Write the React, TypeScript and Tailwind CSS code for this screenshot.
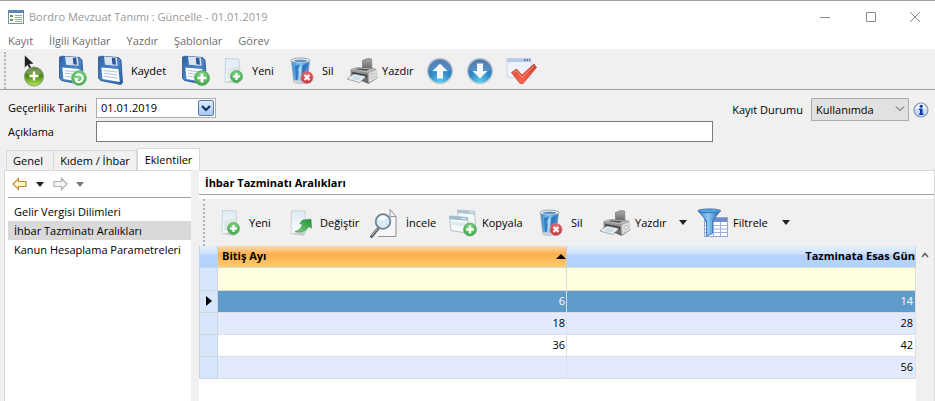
import type { ReactNode } from "react";

const menus = ["Kayıt", "İlgili Kayıtlar", "Yazdır", "Şablonlar", "Görev"];

const sections = ["Gelir Vergisi Dilimleri", "İhbar Tazminatı Aralıkları", "Kanun Hesaplama Parametreleri"];

const rows = [
  { month: "6", days: "14" },
  { month: "18", days: "28" },
  { month: "36", days: "42" },
  { month: "", days: "56" },
];

// Gradients shared by all the toolbar icons.
function IconDefs() {
  return (
    <svg className="absolute size-0" aria-hidden="true">
      <defs>
        <linearGradient id="disk" x1="0" y1="0" x2="1" y2="1">
          <stop offset="0" stopColor="#2f62a8" />
          <stop offset="0.5" stopColor="#4b86c8" />
          <stop offset="1" stopColor="#2b5da0" />
        </linearGradient>
        <linearGradient id="paper" x1="0" y1="0" x2="0" y2="1">
          <stop offset="0" stopColor="#dfeaf4" />
          <stop offset="1" stopColor="#fbfdfd" />
        </linearGradient>
        <radialGradient id="green" cx="0.5" cy="0.35" r="0.65">
          <stop offset="0" stopColor="#8fe08f" />
          <stop offset="1" stopColor="#3aa045" />
        </radialGradient>
        <linearGradient id="lime" x1="0" y1="0" x2="0" y2="1">
          <stop offset="0" stopColor="#3d6a14" />
          <stop offset="0.5" stopColor="#4f8f16" />
          <stop offset="1" stopColor="#b8ee5a" />
        </linearGradient>
        <radialGradient id="red" cx="0.5" cy="0.35" r="0.65">
          <stop offset="0" stopColor="#f08080" />
          <stop offset="1" stopColor="#c22c34" />
        </radialGradient>
        <linearGradient id="bin" x1="0" y1="0" x2="1" y2="0">
          <stop offset="0" stopColor="#2f86cf" />
          <stop offset="0.45" stopColor="#8fd0f5" />
          <stop offset="1" stopColor="#2a6fbb" />
        </linearGradient>
        <radialGradient id="orb" cx="0.5" cy="0.95" r="0.95">
          <stop offset="0" stopColor="#5fd0f5" />
          <stop offset="0.5" stopColor="#2f86c4" />
          <stop offset="1" stopColor="#3a5f9e" />
        </radialGradient>
        <linearGradient id="metal" x1="0" y1="0" x2="0" y2="1">
          <stop offset="0" stopColor="#a9a9a9" />
          <stop offset="1" stopColor="#5c5c5c" />
        </linearGradient>
        <linearGradient id="check" x1="0" y1="0" x2="0" y2="1">
          <stop offset="0" stopColor="#c8402c" />
          <stop offset="1" stopColor="#ff6a52" />
        </linearGradient>
        <linearGradient id="funnel" x1="0" y1="0" x2="1" y2="0">
          <stop offset="0" stopColor="#2e7fca" />
          <stop offset="0.45" stopColor="#8ccbf3" />
          <stop offset="1" stopColor="#1d5ea6" />
        </linearGradient>
        <linearGradient id="arrow" x1="0" y1="1" x2="1" y2="0">
          <stop offset="0" stopColor="#7fd67f" />
          <stop offset="1" stopColor="#1f8c34" />
        </linearGradient>
      </defs>
    </svg>
  );
}

function PlusDot({ cx, cy, r = 6.5 }: { cx: number; cy: number; r?: number }) {
  return (
    <g>
      <circle cx={cx} cy={cy} r={r} fill="url(#green)" stroke="#5fae66" strokeWidth="0.8" />
      <path d={`M${cx - r * 0.6} ${cy}h${r * 1.2}M${cx} ${cy - r * 0.6}v${r * 1.2}`} stroke="#fff" strokeWidth={r * 0.36} />
    </g>
  );
}

function CursorAddIcon() {
  return (
    <svg width="24" height="34" viewBox="0 0 24 34">
      <circle cx="12" cy="22.5" r="9.5" fill="url(#lime)" stroke="#8a9a72" />
      <path d="M4 19a8.5 7 0 0 1 16 0q-8 5-16 0z" fill="#fff" opacity="0.25" />
      <path d="M7.500 22h9M12 17.500v9" stroke="#fff" strokeWidth="2.400" />
      <path d="M2.500 1v13l3-2.800 1.800 3.600 2.200-1.200-1.900-3.300 4.400-.5z" fill="#222" stroke="#fff" strokeWidth="0.500" />
    </svg>
  );
}

function Disk() {
  return (
    <g>
      <path d="M1.500 2 4 1.200 21.500 2.500 24 5 25.500 28 23.500 29.500 3.500 25.500 1.500 23z" fill="url(#disk)" stroke="#23508f" strokeWidth="0.8" />
      <path d="M7 1.600 19.800 2.500 20.600 10.800 8 9.800z" fill="#dbe4ee" />
      <path d="M14.800 2.800 18.300 3.100 19 9.700 15.400 9.300z" fill="#2c589a" />
      <path d="M4.300 12.500 21.300 14 22.800 27 5.500 24z" fill="#fbfdff" />
      <path d="M6.500 15.500 20 17M6.800 18.200 20.300 20M7.200 21 20.600 23.200" stroke="#a9bccd" strokeWidth="0.900" />
    </g>
  );
}

function SaveIcon({ badge }: { badge?: "refresh" | "add" }) {
  return (
    <svg width="30" height="32" viewBox="0 0 30 32">
      <Disk />
      {badge === "add" ? <PlusDot cx={21} cy={23} r={7.5} /> : null}
      {badge === "refresh" ? (
        <g>
          <circle cx="21" cy="23" r="7.500" fill="url(#green)" stroke="#8bc790" />
          <path d="M17.500 25.500a4 4 0 1 0 .3-5" fill="none" stroke="#fff" strokeWidth="2" />
          <path d="M15.500 22.500l5.500 1-2.500 4z" fill="#fff" />
        </g>
      ) : null}
    </svg>
  );
}

function NewIcon() {
  return (
    <svg width="20" height="28" viewBox="0 0 20 28">
      <path d="M1.500 1.500 15 2l1 20L1 25z" fill="url(#paper)" stroke="#bccbd6" strokeWidth="0.8" />
      <path d="M1 25 14 27l2-5z" fill="#c9cfcf" />
      <path d="M3 12 15 9v10L3 22z" fill="#cfe3dc" opacity="0.6" />
      <PlusDot cx={12.500} cy={19.500} r={6} />
    </svg>
  );
}

function EditIcon() {
  return (
    <svg width="22" height="28" viewBox="0 0 22 28">
      <path d="M1.500 1.500 15 2l1 20L1 25z" fill="url(#paper)" stroke="#bccbd6" strokeWidth="0.8" />
      <path d="M1 25 14 27l2-5z" fill="#c4cccc" />
      <path d="M5 22.500c4-1 6.500-3.500 7.500-7l-2.700-1L12.500 11l8.500-.8.5 9-2.500-1.700C16 21.500 12 24 5 22.500z" fill="url(#arrow)" stroke="#2f9440" strokeWidth="0.600" />
    </svg>
  );
}

function TrashIcon() {
  return (
    <svg width="24" height="28" viewBox="0 0 24 28">
      <path d="M1.500 4h18L17 25.500q-6.500 2-13 0z" fill="url(#bin)" stroke="#8aa3ba" strokeWidth="0.8" />
      <path d="m5 9 5-2-3 9 6-8 4-1-4 14-7 2z" fill="#1d65b5" opacity="0.75" />
      <path d="m9 12 3-3-1 12-3 2z" fill="#c8ecff" opacity="0.8" />
      <path d="M3.500 22.500q6 2 13.500 0L16.500 26q-6 1.500-12.500 0z" fill="#c9d2d9" />
      <ellipse cx="10.500" cy="3.500" rx="9.500" ry="2.500" fill="#eef3f6" stroke="#98a6b1" />
      <ellipse cx="10.500" cy="3.800" rx="7" ry="1.200" fill="#5a93c4" />
      <circle cx="17" cy="20.500" r="6" fill="url(#red)" stroke="#d47a7a" strokeWidth="0.8" />
      <path d="m14.500 18 5 5m0-5-5 5" stroke="#fff" strokeWidth="2" />
    </svg>
  );
}

function PrinterIcon() {
  return (
    <svg width="32" height="28" viewBox="0 0 32 28">
      <path d="M16.500 3.500Q22 .5 25.500 2L26 13l-9.500 1z" fill="url(#metal)" stroke="#777" strokeWidth="0.7" />
      <path d="m5 12.500 6.500-2 18 1.500 1.500 9-8.500 5.500L5 19.500z" fill="url(#metal)" stroke="#666" strokeWidth="0.6" />
      <path d="m5 12.500 6.500-2 18 1.500-7 3.500z" fill="#b9b9b9" />
      <path d="m9 12.300 3.500-.9 11 .8-3 1.600z" fill="#4e4e4e" />
      <path d="m22.500 16 8-3.500.5 8.500-8.500 5z" fill="#d9dadb" />
      <path d="m6.500 15 14.500 3v3L6.500 17.500z" fill="#353535" />
      <path d="m8 17 12 2.500-6.500 6L1 22z" fill="#eef4f8" stroke="#8f979d" strokeWidth="0.8" />
      <path d="m8 18.500 8.500 1.800-4 3.400-7-1.500z" fill="#cadeea" />
      <circle cx="27" cy="18.500" r="1.500" fill="#fff" stroke="#999" strokeWidth="0.6" />
    </svg>
  );
}

function OrbIcon({ down }: { down?: boolean }) {
  return (
    <svg width="28" height="28" viewBox="0 0 28 28">
      <circle cx="14" cy="14" r="12.500" fill="url(#orb)" stroke="#c3ccd6" strokeWidth="1.500" />
      <path d="M2.800 13a11.200 11.200 0 0 1 22.400 0q-11 5-22.400 0z" fill="#fff" opacity="0.15" />
      <path d={down ? "M11 6.500h6V14h4.500L14 21.500 6.500 14H11z" : "M11 21.500h6V14h4.500L14 6.500 6.500 14H11z"} fill="#f4f8fc" />
    </svg>
  );
}

function CheckIcon() {
  return (
    <svg width="32" height="28" viewBox="0 0 32 28">
      <rect x="1" y="1.500" width="24" height="19" fill="#eef3fb" stroke="#c5d1e2" strokeWidth="0.8" />
      <path d="M1 1.500h24V5H1z" fill="#b7cbe8" />
      <path d="M18 3h1.500m1 0H22m1 0h1" stroke="#49628f" strokeWidth="1.300" />
      <path d="m5.500 15.500 5-3.500 5.500 6L28 7l2.500 3.500L17 26.500h-3z" fill="url(#check)" stroke="#c94632" strokeWidth="0.8" />
      <path d="m7.500 15.500 2.800-1.800 5.700 6.500L28 9" fill="none" stroke="#ffa08c" strokeWidth="0.900" />
    </svg>
  );
}

function InspectIcon() {
  return (
    <svg width="28" height="30" viewBox="0 0 28 30">
      <path d="M6 2h14l6 6.500V28.500H6z" fill="#f5f6f7" />
      <path d="M20 1.500v7h6zM26 8.500v20H8" fill="none" stroke="#8c9399" />
      <path d="m9 19.500-7.500 9" stroke="#5c6670" strokeWidth="3" strokeLinecap="round" />
      <path d="m8.500 19.500-7 8.300" stroke="#b9c2ca" />
      <circle cx="13" cy="13.500" r="7.300" fill="#d8ebf8" stroke="#6f8396" strokeWidth="1.800" />
      <path d="M8 12a5.300 5.300 0 0 1 9-2.500q-3 3.500-9 2.500z" fill="#fff" opacity="0.9" />
    </svg>
  );
}

function CopyIcon() {
  return (
    <svg width="30" height="28" viewBox="0 0 30 28">
      <path d="m9.500 1 17 1.500 1 15-17-1.500z" fill="#f4f8f9" stroke="#a9b6bc" strokeWidth="0.8" />
      <path d="m9.500 1 17 1.500.2 3-17-1.500z" fill="#a9c4d3" />
      <path d="m1.500 7 18 1.500 1.500 16L3 21.500z" fill="#f7fafa" stroke="#a2b0b6" strokeWidth="0.8" />
      <path d="m1.500 7 18 1.500.3 3.200-18-1.500z" fill="#9dbccd" />
      <path d="m3 12 17 2v4L3.500 16z" fill="#dfecee" />
      <path d="M14 9.500l4.500.4M21.500 3.300l4 .4" stroke="#e9f4fa" />
      <PlusDot cx={22} cy={20.500} />
    </svg>
  );
}

function FilterIcon() {
  return (
    <svg width="32" height="30" viewBox="0 0 32 30">
      <rect x="7.500" y="9.500" width="23" height="19" fill="#fff" stroke="#96a6cf" />
      <path d="M8 10h22v4H8z" fill="#6f8ccd" />
      <path d="M8 17.500h22M8 21h22M8 24.500h22M16.500 14v14M23.500 14v14" stroke="#9eaee0" />
      <path d="M1 2.500 9.500 13v15l6-2.500V13L23.500 2.500z" fill="url(#funnel)" stroke="#2b69ac" strokeWidth="0.8" />
      <ellipse cx="12.300" cy="2.800" rx="11.300" ry="1.900" fill="#5aa2dd" stroke="#2b69ac" strokeWidth="0.8" />
    </svg>
  );
}

function InfoIcon() {
  return (
    <svg width="16" height="16" viewBox="0 0 16 16">
      <circle cx="8" cy="8" r="7" fill="#c9dcf5" stroke="#8796ab" strokeWidth="1.200" />
      <path d="M2.500 7a5.500 5.500 0 0 1 11 0z" fill="#fff" opacity="0.6" />
      <circle cx="8.200" cy="4.200" r="1.500" fill="#0a37b5" />
      <path d="M6 6.500h3.500v5h1V13H6v-1.500h1V8H6z" fill="#0a37b5" />
    </svg>
  );
}

function Caret({ className = "text-black" }: { className?: string }) {
  return (
    <svg width="8" height="5" viewBox="0 0 8 5" className={className}>
      <path d="M0 0h8L4 5z" fill="currentColor" />
    </svg>
  );
}

function NavArrow({ flip, color, fill }: { flip?: boolean; color: string; fill: string }) {
  return (
    <svg width="16" height="14" viewBox="0 0 16 14">
      <path
        d={flip ? "M15 7 9.500 1.500v3H2v5h7.500v3z" : "M1 7l5.500-5.500v3H14v5H6.500v3z"}
        fill={fill}
        stroke={color}
        strokeWidth="1.200"
      />
    </svg>
  );
}

function Grip() {
  return <span className="w-0.5 shrink-0 self-stretch border-l-2 border-dotted border-[#b4b4b4]" />;
}

function Tool({ icon, label, title, className }: { icon: ReactNode; label?: string; title?: string; className: string }) {
  return (
    <button type="button" aria-label={label ?? title} className={`flex shrink-0 items-center ${className}`}>
      {icon}
      {label}
    </button>
  );
}

function TitleBar() {
  return (
    <header className="flex h-8 items-center border-t border-[#a0a0a0] pl-2 text-[#999]">
      <svg width="16" height="14" viewBox="0 0 16 14" className="mr-[5px]">
        <rect x="0.500" y="0.500" width="15" height="13" fill="#fff" stroke="#7c8fa6" />
        <path d="M0 0h16v3H0z" fill="#5f86b5" />
        <path d="M2 5h3v2H2zM2 9h3v2H2z" fill="#5a9a55" />
        <path d="M7 5.500h7M7 7.500h7M7 9.500h7M7 11.500h7" stroke="#8ea8c8" />
      </svg>
      <h1 className="flex-1">Bordro Mevzuat Tanımı : Güncelle - 01.01.2019</h1>
      <button type="button" aria-label="Simge durumuna küçült" className="flex w-11 justify-center">
        <svg width="10" height="10" viewBox="0 0 10 10"><path d="M0 5.500h10" stroke="#8a8a8a" /></svg>
      </button>
      <button type="button" aria-label="Ekranı kapla" className="flex w-12 justify-center">
        <svg width="10" height="10" viewBox="0 0 10 10"><path d="M.5.5h9v9h-9z" fill="none" stroke="#8a8a8a" /></svg>
      </button>
      <button type="button" aria-label="Kapat" className="flex w-10 justify-center">
        <svg width="10" height="10" viewBox="0 0 10 10"><path d="m0 0 10 10M10 0 0 10" stroke="#8a8a8a" /></svg>
      </button>
    </header>
  );
}

function MainToolbar() {
  return (
    <div className="flex h-[41px] items-center border-b border-[#a0a0a0] pt-[3px] pl-1">
      <Grip />
      <Tool className="ml-4 w-9" title="Seç" icon={<CursorAddIcon />} />
      <Tool className="w-[39px]" title="Kaydet ve yenile" icon={<SaveIcon badge="refresh" />} />
      <Tool className="w-[84px] gap-1" label="Kaydet" icon={<SaveIcon />} />
      <Tool className="w-[43px]" title="Kaydet ve yeni" icon={<SaveIcon badge="add" />} />
      <Tool className="w-[66px] gap-2" label="Yeni" icon={<NewIcon />} />
      <Tool className="w-[56px] gap-2" label="Sil" icon={<TrashIcon />} />
      <Tool className="w-20 gap-1" label="Yazdır" icon={<PrinterIcon />} />
      <Tool className="w-10" title="Yukarı" icon={<OrbIcon />} />
      <Tool className="w-10" title="Aşağı" icon={<OrbIcon down />} />
      <Tool className="w-8" title="Onayla" icon={<CheckIcon />} />
    </div>
  );
}

function RecordForm() {
  return (
    <form className="flex items-start pt-2 pr-1.5 pl-2">
      <div className="grid flex-1 grid-cols-[88px_1fr] items-center gap-y-[3px]">
        <label htmlFor="valid-date">Geçerlilik Tarihi</label>
        <div className="flex h-5 w-30 items-center border border-[#abadb3] bg-white pr-px">
          <input id="valid-date" defaultValue="01.01.2019" className="w-full min-w-0 pl-1 outline-none" />
          <button
            type="button"
            aria-label="Takvimi aç"
            className="flex h-4 w-4 shrink-0 items-center justify-center rounded-xs border border-[#5c7da8] bg-linear-to-b from-[#dcebfd] to-[#a6c8f5]"
          >
            <svg width="10" height="7" viewBox="0 0 10 7"><path d="m1 1 4 4 4-4" fill="none" stroke="#15305c" strokeWidth="2.200" /></svg>
          </button>
        </div>
        <label htmlFor="description">Açıklama</label>
        <input id="description" className="h-[21px] w-full border border-[#7a7a7a] bg-white px-1 outline-none" />
      </div>
      <div className="flex w-54 items-center justify-end">
        <label htmlFor="status" className="mr-2">Kayıt Durumu</label>
        <div className="relative mr-1">
          <select id="status" className="h-[23px] w-[98px] appearance-none border border-[#adadad] bg-[#e1e1e1] pl-1 outline-none">
            <option>Kullanımda</option>
          </select>
          <svg width="10" height="6" viewBox="0 0 10 6" className="pointer-events-none absolute top-2 right-1">
            <path d="m1 .5 4 4 4-4" fill="none" stroke="#444" />
          </svg>
        </div>
        <InfoIcon />
      </div>
    </form>
  );
}

function Tabs() {
  const tab = "border border-b-0 border-[#d9d9d9]";
  return (
    <div role="tablist" className="mt-1.5 flex items-end pl-1.5">
      <button type="button" role="tab" className={`h-5 w-12 pr-1 ${tab}`}>Genel</button>
      <button type="button" role="tab" className={`h-5 w-[83px] border-l-0 ${tab}`}>Kıdem / İhbar</button>
      <button type="button" role="tab" aria-selected="true" className={`h-[22px] w-[63px] bg-white ${tab}`}>Eklentiler</button>
    </div>
  );
}

function Sidebar() {
  return (
    <aside className="w-[187px] shrink-0 border-t border-l border-[#d9d9d9] bg-white pl-[3px]">
      <div className="flex h-[27px] items-center gap-2 border-b border-[#a0a0a0] pl-1">
        <button type="button" aria-label="Geri"><NavArrow color="#c08a2c" fill="#fff3c4" /></button>
        <Caret className="text-[#222]" />
        <button type="button" aria-label="İleri"><NavArrow flip color="#b0b0b0" fill="#f6f6f6" /></button>
        <Caret className="text-[#777]" />
      </div>
      <ul className="pt-1">
        {sections.map((name, i) => (
          <li key={name}>
            <a href="#" className={`block h-[19px] pl-1.5 leading-[19px] whitespace-nowrap ${i === 1 ? "bg-[#d9d9d9]" : ""}`}>
              {name}
            </a>
          </li>
        ))}
      </ul>
    </aside>
  );
}

function GridToolbar() {
  return (
    <div className="flex h-[47px] items-center pl-1">
      <Grip />
      <Tool className="ml-4 w-[69px] gap-2" label="Yeni" icon={<NewIcon />} />
      <Tool className="w-20 gap-2" label="Değiştir" icon={<EditIcon />} />
      <Tool className="w-[78px] gap-2" label="İncele" icon={<InspectIcon />} />
      <Tool className="w-[91px] gap-1" label="Kopyala" icon={<CopyIcon />} />
      <Tool className="w-[60px] gap-2" label="Sil" icon={<TrashIcon />} />
      <Tool className="w-20 gap-1" label="Yazdır" icon={<PrinterIcon />} />
      <button type="button" aria-label="Yazdır seçenekleri" className="flex w-[18px]"><Caret className="text-[#222]" /></button>
      <Tool className="w-[85px] gap-1" label="Filtrele" icon={<FilterIcon />} />
      <button type="button" aria-label="Filtre seçenekleri"><Caret className="text-[#222]" /></button>
    </div>
  );
}

function NoticeGrid() {
  const blueHead = "bg-linear-to-b from-[#e4f0ff] from-0% via-[#cfe2fd] via-35% to-[#b4d2fb] to-45%";
  return (
    <table className="w-full table-fixed border-collapse">
      <thead>
        <tr className="h-[21px]">
          <th className={`w-[18px] border-x border-[#c3d3e6] ${blueHead}`} />
          <th className="w-[349px] border-r border-[#c3d3e6] bg-linear-to-b from-[#fcd9ab] from-0% via-[#fdae4a] via-40% to-[#fdcb72] px-1 text-left font-bold">
            <span className="flex items-center justify-between">
              Bitiş Ayı
              <svg width="10" height="5" viewBox="0 0 10 5" className="-mr-1"><path d="M0 5h10L5 0z" /></svg>
            </span>
          </th>
          <th className={`border-r border-[#c3d3e6] text-right font-bold ${blueHead}`}>Tazminata Esas Gün</th>
        </tr>
      </thead>
      <tbody>
        <tr className="h-[23px] bg-[#ffffe1]">
          <td className="border border-[#cdd6df] bg-[#d6e6fb]" />
          <td className="border border-[#dcdcd0]" />
          <td className="border border-[#dcdcd0]" />
        </tr>
        {rows.map((row, i) => (
          <tr
            key={row.days}
            className={`h-[22px] ${i === 0 ? "bg-[#5f9bcb] text-white" : i === 2 ? "bg-white" : "bg-[#e4eafd]"}`}
          >
            <td className="border border-[#cdd6df] bg-[#d6e6fb]">
              {i === 0 ? (
                <svg width="6" height="10" viewBox="0 0 6 10" className="ml-1.5"><path d="M0 0v10l6-5z" fill="#000" /></svg>
              ) : null}
            </td>
            <td className="border border-[#dcdfe6] pr-px text-right">{row.month}</td>
            <td className="border border-[#dcdfe6] pr-0.5 text-right">{row.days}</td>
          </tr>
        ))}
      </tbody>
    </table>
  );
}

export default function App() {
  return (
    <div className="flex min-h-screen flex-col bg-[#f0f0f0] font-['Open_Sans','Noto_Sans',sans-serif] text-[11px] leading-4 text-black">
      <IconDefs />
      <div className="bg-white">
        <TitleBar />
        <nav className="flex h-[17px] items-center gap-4 pl-2 text-[#6d6d6d]">
          {menus.map((name) => (
            <button key={name} type="button">{name}</button>
          ))}
        </nav>
      </div>
      <MainToolbar />
      <RecordForm />
      <Tabs />
      <main className="flex flex-1 pl-1">
        <Sidebar />
        <section className="ml-2 flex min-w-0 flex-1 flex-col border-t border-r border-[#d9d9d9]">
          <div className="bg-white pb-1">
            <h2 className="flex h-6 items-center border-b border-[#a0a0a0] pl-1.5 font-bold">İhbar Tazminatı Aralıkları</h2>
          </div>
          <GridToolbar />
          <div className="flex flex-1">
            <div className="min-w-0 flex-1 bg-white">
              <NoticeGrid />
            </div>
            <div className="flex w-[18px] flex-col items-center pt-1.5">
              <svg width="8" height="6" viewBox="0 0 8 6"><path d="m1 5 3-3.500L7 5" fill="none" stroke="#606060" strokeWidth="1.500" /></svg>
            </div>
          </div>
        </section>
      </main>
    </div>
  );
}
